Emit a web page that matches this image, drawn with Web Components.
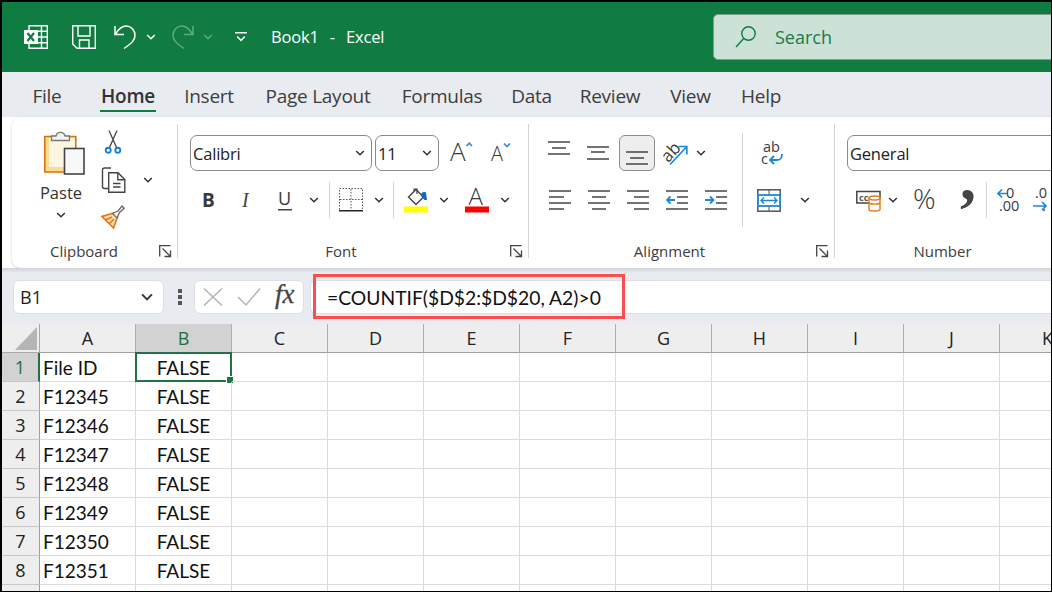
<!DOCTYPE html>
<html>
<head>
<meta charset="utf-8">
<style>
  html, body { margin: 0; height: 100%; background: #000; overflow: hidden; }
  body { padding: 2px 1px 1px 2px; box-sizing: border-box; font-family: "Open Sans", sans-serif; }
</style>
</head>
<body>
<xl-window>
  <xl-titlebar></xl-titlebar>
  <xl-tabs></xl-tabs>
  <xl-ribbon>
    <xl-group label="Clipboard" launcher style="width:166px;--label-shift:3px">
      <xl-row style="padding-left:18px">
        <xl-col style="width:62px;padding-top:5px;align-items:center">
          <xl-icon name="paste" w="62" h="47" style="padding-left:7px"></xl-icon>
          <xl-text size="16.5" style="margin-top:7px">Paste</xl-text>
          <xl-icon name="chev" w="62" h="12" style="margin-top:6px"></xl-icon>
        </xl-col>
        <xl-col style="width:42px">
          <xl-icon name="cut" w="42" h="35"></xl-icon>
          <xl-icon name="copy" w="42" h="38" style="margin-top:2px"></xl-icon>
          <xl-icon name="brush" w="42" h="36"></xl-icon>
        </xl-col>
        <xl-col style="width:28px;padding-top:37px">
          <xl-icon name="chev" w="28" h="38"></xl-icon>
        </xl-col>
      </xl-row>
    </xl-group>

    <xl-group label="Font" launcher style="width:351px">
      <xl-col style="padding:11px 0 0 11px">
        <xl-row style="padding-left:1px;gap:3px">
          <xl-select style="width:182px" value="Calibri"></xl-select>
          <xl-select style="width:64px" value="11"></xl-select>
          <xl-icon name="grow" w="34" h="36" style="margin-left:3px"></xl-icon>
          <xl-icon name="shrink" w="34" h="36" style="margin-left:1px"></xl-icon>
        </xl-row>
        <xl-row style="margin-top:11px">
          <xl-icon name="bold" w="39" h="36"></xl-icon>
          <xl-icon name="italic" w="38" h="36"></xl-icon>
          <xl-icon name="underline" w="38" h="36"></xl-icon>
          <xl-icon name="chev" w="20" h="36"></xl-icon>
          <xl-sep style="margin:0 5px;height:36px"></xl-sep>
          <xl-icon name="borders" w="31" h="36"></xl-icon>
          <xl-icon name="chev" w="26" h="36"></xl-icon>
          <xl-sep style="margin:0 2px 0 1px;height:36px"></xl-sep>
          <xl-icon name="fill" w="40" h="36"></xl-icon>
          <xl-icon name="chev" w="16" h="36"></xl-icon>
          <xl-icon name="color" w="40" h="36" style="margin-left:5px"></xl-icon>
          <xl-icon name="chev" w="16" h="36"></xl-icon>
        </xl-row>
      </xl-col>
    </xl-group>

    <xl-group label="Alignment" launcher style="width:306px">
      <xl-row style="padding:11px 0 0 11px">
        <xl-col style="width:202px">
          <xl-row>
            <xl-icon name="top" w="38" h="36" style="padding-bottom:10px"></xl-icon>
            <xl-icon name="middle" w="40" h="36"></xl-icon>
            <xl-icon name="bottom" w="36" h="36" active style="margin-left:1px"></xl-icon>
            <xl-icon name="orient" w="40" h="36"></xl-icon>
            <xl-icon name="chev" w="12" h="36"></xl-icon>
          </xl-row>
          <xl-row style="margin-top:11px">
            <xl-icon name="left" w="39" h="36"></xl-icon>
            <xl-icon name="center" w="39" h="36"></xl-icon>
            <xl-icon name="right" w="39" h="36"></xl-icon>
            <xl-icon name="outdent" w="39" h="36"></xl-icon>
            <xl-icon name="indent" w="39" h="36"></xl-icon>
          </xl-row>
        </xl-col>
        <xl-sep style="height:94px;margin-top:-2px"></xl-sep>
        <xl-col>
          <xl-icon name="wrap" w="58" h="36"></xl-icon>
          <xl-row style="margin-top:11px">
            <xl-icon name="merge" w="52" h="36"></xl-icon>
            <xl-icon name="chev" w="20" h="36"></xl-icon>
          </xl-row>
        </xl-col>
      </xl-row>
    </xl-group>

    <xl-group label="Number" style="width:240px" last>
      <xl-col style="padding:11px 0 0 12px">
        <xl-select style="width:228px" value="General" bare></xl-select>
        <xl-row style="margin-top:11px">
          <xl-icon name="accounting" w="42" h="36"></xl-icon>
          <xl-icon name="chev" w="8" h="36"></xl-icon>
          <xl-icon name="percent" w="58" h="36"></xl-icon>
          <xl-icon name="comma" w="22" h="36"></xl-icon>
          <xl-sep style="margin-left:9px;height:36px"></xl-sep>
          <xl-icon name="decup" w="44" h="36"></xl-icon>
          <xl-icon name="decdown" w="28" h="36"></xl-icon>
        </xl-row>
      </xl-col>
    </xl-group>
  </xl-ribbon>
  <xl-formula-bar cell="B1" formula="=COUNTIF($D$2:$D$20, A2)&gt;0"></xl-formula-bar>
  <xl-sheet></xl-sheet>
</xl-window>

<script>
const UI_FONT = '"Open Sans", sans-serif';
const lines = (rows) => rows.map(([x1, x2, y]) => `<path d="M${x1} ${y}H${x2}"/>`).join('');
const stack = (body) => `<g stroke="#444" stroke-width="1.4" fill="none">${body}</g>`;
const label = (x, y, size, text, extra = '') =>
  `<text x="${x}" y="${y}" font-size="${size}" font-family='${UI_FONT}' fill="#3a3a3a" ${extra}>${text}</text>`;
const THIN = 'font-weight="300"';

const ICONS = {
  chev: [10, 6, '<path d="M1.2 1l3.8 3.8L8.8 1" fill="none" stroke="currentColor" stroke-width="1.5"/>'],
  logo: [24, 24, `<g fill="none" stroke="#fff" stroke-width="1.4"><path d="M5 .7h18.3v22.6H5z"/><path d="M13 6.3h10M13 12h10M13 17.7h10M17.5 1v22"/></g>
    <rect x="0" y="5" width="14" height="14" fill="#fff"/><path d="M3.5 8l6.5 8M10 8l-6.5 8" stroke="#107c41" stroke-width="2.2" fill="none"/>`],
  save: [24, 24, `<g fill="none" stroke="#fff" stroke-width="1.4"><path d="M.7.7h22.6v22.6H5L.7 19z"/><path d="M6 1v10h12V1M7.5 23v-8h9.5v8"/></g>`],
  undo: [22, 24, `<path d="M1 1v8.5h9M1.5 9C5 3.5 8 1 12 1c5 0 9 4 9 9.5 0 4.5-3 7.5-11 13" fill="none" stroke="currentColor" stroke-width="1.5"/>`],
  redo: [22, 24, `<g transform="translate(22 0) scale(-1 1)"><path d="M1 1v8.5h9M1.5 9C5 3.5 8 1 12 1c5 0 9 4 9 9.5 0 4.5-3 7.5-11 13" fill="none" stroke="currentColor" stroke-width="1.5"/></g>`],
  custom: [12, 10, '<path d="M0 .8h12M2.2 4.5L6 8.5l3.8-4" fill="none" stroke="currentColor" stroke-width="1.5"/>'],
  search: [21, 22, '<g fill="none" stroke="#107c41" stroke-width="1.4"><circle cx="13.5" cy="7.5" r="6.7"/><path d="M8.7 12.5L1 21"/></g>'],
  paste: [41, 45, `<path d="M.8 6.5h31v35.5H.8z" fill="#fbdc94" stroke="#d9730d" stroke-width="1.6"/><rect x="5" y="8" width="26" height="29" fill="#fff6e2"/>
    <path d="M7.5 10.5V6H12a4.6 4.6 0 0 1 9 0h4.5v4.5z" fill="#f4f4f4" stroke="#777" stroke-width="1.3"/>
    <rect x="20.5" y="18.5" width="19.5" height="25.5" fill="#f8f8f8" stroke="#444" stroke-width="1.6"/>`],
  cut: [16, 24, `<g fill="none"><path d="M4 .5l7.5 17M12 .5l-7.5 17" stroke="#444" stroke-width="1.3"/>
    <circle cx="3.2" cy="20.3" r="2.5" stroke="#1e7fd0" stroke-width="1.9"/><circle cx="12.8" cy="20.3" r="2.5" stroke="#1e7fd0" stroke-width="1.9"/></g>`],
  copy: [25, 26, `<g fill="none" stroke="#444" stroke-width="1.4"><path d="M10 1H3.5a2 2 0 0 0-2 2v16.5a2 2 0 0 0 2 2H7"/>
    <path d="M7.7 5.7h9.3l6.8 6.8v12.8H7.7z" fill="#fff"/><path d="M16.8 6v6.8h7M12 16.5h7.5M12 20h7.5"/></g>`],
  brush: [24, 24, `<path d="M12.5 8L1 11.5 12.5 23l4-11z" fill="#fce0b8" stroke="#e5770f" stroke-width="1.7"/>
    <path d="M4 15l7-3M8 19l5-5" stroke="#e5770f" stroke-width="1.5"/>
    <path d="M11.5 8.5l5.5-2.5 4-5 2.2 2.2-4.7 4.2-2.5 5.5z" fill="#fff" stroke="#666" stroke-width="1.3"/>`],
  grow: [24, 24, label(0, 20, 26, 'A', THIN) + '<path d="M16.5 5l2.8-2.8L22 5" fill="none" stroke="#2b8ed6" stroke-width="1.7"/>'],
  shrink: [22, 24, label(2, 20, 20, 'A', THIN) + '<path d="M15 2.5l3 3 3-3" fill="none" stroke="#2b8ed6" stroke-width="1.7"/>'],
  bold: [14, 18, label(0, 16, 19, 'B', 'font-weight="700"')],
  italic: [12, 18, `<text x="1" y="16" font-size="20" font-style="italic" font-family="'Liberation Serif',serif" fill="#444">I</text>`],
  underline: [14, 21, label(0, 15, 18, 'U') + '<path d="M0 19.8h14" stroke="#444" stroke-width="1.4"/>'],
  borders: [24, 24, `<g fill="none" stroke="#555" stroke-width="1" stroke-dasharray="1.5 1.5"><path d="M.5.5h23v22H.5zM12 1v21M1 11.5h22"/></g><path d="M0 22.8h24" stroke="#222" stroke-width="1.5"/>`],
  fill: [24, 25, `<path d="M12 1.5L4.500 9l7.500 7.500L19.500 9z" fill="none" stroke="#444" stroke-width="1.4"/>
    <path d="M10 3V1h3v5" fill="none" stroke="#444" stroke-width="1.2"/><path d="M17 8c0-3 1.5-5 5-3.5L23 12h-2.5" fill="#0f6cbd"/><rect y="18.5" width="24" height="6" fill="#ff0"/>`],
  color: [24, 25, label(3.5, 17, 24, 'A', THIN) + '<rect y="18.5" width="24" height="6" fill="#f00"/>'],
  top: [22, 14, stack(lines([[0, 22, 1], [4, 18, 7], [0, 22, 13]]))],
  middle: [22, 14, stack(lines([[0, 22, 1], [4, 18, 6], [0, 22, 13]]))],
  bottom: [22, 14, stack(lines([[0, 22, 1], [4, 18, 7], [0, 22, 13]]))],
  left: [22, 20, stack(lines([[0, 22, 1], [0, 15, 7], [0, 22, 13], [0, 15, 19]]))],
  center: [22, 20, stack(lines([[0, 22, 1], [4, 18, 7], [0, 22, 13], [4, 18, 19]]))],
  right: [22, 20, stack(lines([[0, 22, 1], [7, 22, 7], [0, 22, 13], [7, 22, 19]]))],
  outdent: [22, 20, stack(lines([[0, 22, 1], [11, 22, 7], [11, 22, 13], [0, 22, 19]])) +
    '<path d="M9 10H1M4.5 6.5L1 10l3.5 3.5" fill="none" stroke="#1e88d8" stroke-width="1.8"/>'],
  indent: [22, 20, stack(lines([[0, 22, 1], [11, 22, 7], [11, 22, 13], [0, 22, 19]])) +
    '<path d="M0 10h8M5 6.5L8.5 10 5 13.5" fill="none" stroke="#1e88d8" stroke-width="1.8"/>'],
  orient: [26, 25, label(0, 18, 17, 'ab', 'transform="rotate(-48 8 13)"') +
    '<path d="M8 23.5L24.5 6M16.500 5.500h8.300v8" fill="none" stroke="#1e88d8" stroke-width="1.7"/>'],
  wrap: [22, 23, label(2, 10, 14.5, 'ab') + label(0, 21.5, 14.5, 'c') +
    '<path d="M9.5 18h6c4.500 0 5.500-2 5.500-6M13 14l-4 4 4 4" fill="none" stroke="#1e88d8" stroke-width="1.8"/>'],
  merge: [24, 23, `<rect x=".8" y=".8" width="22.4" height="21.4" fill="none" stroke="#555" stroke-width="1.5"/><path d="M12 1v5M12 17v5" stroke="#555"/>
    <rect x="1" y="6" width="22" height="11" fill="#fff" stroke="#1e88d8" stroke-width="1.8"/>
    <path d="M4 11.5h16M7 8.5l-3 3 3 3M17 8.5l3 3-3 3" fill="none" stroke="#1e88d8" stroke-width="1.4"/>`],
  accounting: [25, 21, `<path d="M19 13H.8V1.500H24v7" fill="none" stroke="#444" stroke-width="1.5"/>
    <text x="3" y="10.5" font-size="9" font-weight="700" font-family='${UI_FONT}' fill="#555">cc</text>
    <g fill="#fff" stroke="#e5770f" stroke-width="1.4"><path d="M13 8h11v11.5c0 1-2 1.500-5.500 1.500S13 20.500 13 19.500z"/><ellipse cx="18.5" cy="8" rx="5.5" ry="2"/><path d="M13 13c1 1.500 10 1.500 11 0" fill="none"/></g>`],
  percent: [24, 24, label(-1, 21, 28, '%', THIN)],
  comma: [13, 24, `<text x="0" y="11" font-size="64" font-weight="700" font-family="'Liberation Serif',serif" fill="#444">,</text>`],
  decup: [24, 24, label(9, 10, 14.5, '0') + label(2, 23, 14.5, '.00') +
    '<path d="M10 5.500H1M5 1.500l-4 4 4 4" fill="none" stroke="#1e88d8" stroke-width="1.7"/>'],
  decdown: [24, 24, label(2, 10, 14.5, '.0') + label(9, 23, 14.5, '.') +
    '<path d="M0 18h13M9 14l4 4-4 4" fill="none" stroke="#1e88d8" stroke-width="1.7"/>'],
  launcher: [12, 12, '<path d="M.7 11.5V.7h10.800M3.500 3.500l7.500 7.500M11.500 5.500v6h-6" fill="none" stroke="#444" stroke-width="1.3"/>'],
  x: [20, 18, '<path d="M1 .5l18 17M19 .5l-18 17" fill="none" stroke="#b3b3b3" stroke-width="1.5"/>'],
  check: [24, 18, '<path d="M1 9l8 8L23 .5" fill="none" stroke="#b3b3b3" stroke-width="1.5"/>'],
  fx: [22, 24, `<text x="0" y="18" font-size="27" font-style="italic" font-family="'Liberation Serif',serif" fill="#444" stroke="#444" stroke-width=".3">fx</text>`],
};

class XlIcon extends HTMLElement {
  constructor() {
    super();
    const [w, h, body] = ICONS[this.getAttribute('name')];
    const boxW = this.getAttribute('w') || w;
    const boxH = this.getAttribute('h') || h;
    this.attachShadow({ mode: 'open' }).innerHTML = `
      <style>
        :host { display: flex; align-items: center; justify-content: center; flex: none; box-sizing: border-box;
                width: ${boxW}px; height: ${boxH}px; color: #333; }
        :host([active]) { background: #eeeeee; border: 1px solid #8c8c8c; border-radius: 6px; padding-top: 10px; }
        svg { display: block; flex: none; overflow: visible; }
      </style>
      <svg width="${w}" height="${h}" viewBox="0 0 ${w} ${h}">${body}</svg>`;
  }
}

class XlWindow extends HTMLElement {
  constructor() {
    super();
    this.attachShadow({ mode: 'open' }).innerHTML = `
      <style>
        :host { display: flex; flex-direction: column; height: 100%; overflow: hidden; background: #fff; }
      </style>
      <slot></slot>`;
  }
}

class XlTitlebar extends HTMLElement {
  constructor() {
    super();
    this.attachShadow({ mode: 'open' }).innerHTML = `
      <style>
        :host { display: flex; align-items: center; flex: none; height: 70px; background: #107c41; color: #fff;
                padding-left: 22px; overflow: hidden; font-family: ${UI_FONT}; }
        .title { margin: 0 0 2px 24px; font-size: 16.5px; white-space: pre; letter-spacing: -.2px; word-spacing: 1.5px; }
        .search { margin-left: auto; flex: none; width: 420px; height: 46px; box-sizing: border-box; margin-right: -82px;
                  display: flex; align-items: center; gap: 19px; padding-left: 21px;
                  background: #cde2d6; border: 1px solid #7f9d8c; border-radius: 5px;
                  color: #1a7a48; font-size: 18px; }
        xl-icon { color: #fff; }
      </style>
      <xl-icon name="logo"></xl-icon>
      <xl-icon name="save" style="margin-left:24px;color:#fff"></xl-icon>
      <xl-icon name="undo" w="24" style="margin-left:17px;color:#fff"></xl-icon>
      <xl-icon name="chev" style="margin-left:9px;color:#fff"></xl-icon>
      <xl-icon name="redo" w="24" style="margin-left:15px;color:#5fa884"></xl-icon>
      <xl-icon name="chev" style="margin-left:8px;color:#5fa884"></xl-icon>
      <xl-icon name="custom" style="margin-left:22px;color:#fff"></xl-icon>
      <span class="title">Book1  -  Excel</span>
      <div class="search"><xl-icon name="search"></xl-icon><span>Search</span></div>`;
  }
}

const TABS = [
  ['File', 30, 30], ['Home', 56, 38], ['Insert', 48, 29], ['Page Layout', 106, 32], ['Formulas', 80, 31],
  ['Data', 41, 29], ['Review', 60, 28], ['View', 41, 30], ['Help', 40, 30],
];

class XlTabs extends HTMLElement {
  constructor() {
    super();
    const tabs = TABS.map(([name, w, gap]) =>
      `<div class="tab${name === 'Home' ? ' on' : ''}" style="width:${w}px;margin-left:${gap}px">${name}</div>`).join('');
    this.attachShadow({ mode: 'open' }).innerHTML = `
      <style>
        :host { display: flex; flex: none; height: 45px; background: #e8ecf1; font-family: ${UI_FONT};
                font-size: 19px; color: #3d3d3d; letter-spacing: -.25px; }
        .tab { display: flex; justify-content: center; white-space: nowrap; padding-top: 11px; box-sizing: border-box; height: 40px; }
        .on { font-weight: 600; border-bottom: 2.5px solid #107c41; color: #333; }
      </style>
      ${tabs}`;
  }
}

class XlRibbon extends HTMLElement {
  constructor() {
    super();
    this.attachShadow({ mode: 'open' }).innerHTML = `
      <style>
        :host { display: flex; flex: none; height: 151px; margin-left: 10px; background: #fff;
                border-radius: 9px 0 0 9px; box-shadow: 0 1px 3px rgba(0,0,0,.18); overflow: hidden; }
      </style>
      <slot></slot>`;
  }
}

class XlGroup extends HTMLElement {
  constructor() {
    super();
    const launcher = this.hasAttribute('launcher') ? '<xl-icon name="launcher" w="24" h="20"></xl-icon>' : '';
    this.attachShadow({ mode: 'open' }).innerHTML = `
      <style>
        :host { display: flex; flex-direction: column; flex: none; box-sizing: border-box; height: 151px; padding: 7px 0 7px;
                background: linear-gradient(#d4d4d4,#d4d4d4) right 7px / 1px 134px no-repeat;
                font-family: ${UI_FONT}; }
        .body { flex: 1; min-height: 0; display: flex; }
        .foot { display: flex; align-items: center; height: 20px; padding-right: 1px; padding-left: var(--label-shift, 0); }
        .name { flex: 1; text-align: center; font-size: 15px; color: #3d3d3d; padding-right: ${launcher ? 0 : 24}px; }
      </style>
      <div class="body"><slot></slot></div>
      <div class="foot"><div class="name">${this.getAttribute('label')}</div>${launcher}</div>`;
  }
}

class XlRow extends HTMLElement {
  constructor() {
    super();
    this.attachShadow({ mode: 'open' }).innerHTML = `
      <style>:host { display: flex; align-items: flex-start; }</style><slot></slot>`;
  }
}

class XlCol extends HTMLElement {
  constructor() {
    super();
    this.attachShadow({ mode: 'open' }).innerHTML = `
      <style>:host { display: flex; flex-direction: column; flex: none; }</style><slot></slot>`;
  }
}

class XlSep extends HTMLElement {
  constructor() {
    super();
    this.attachShadow({ mode: 'open' }).innerHTML = `
      <style>:host { display: block; flex: none; width: 1px; background: #d4d4d4; }</style>`;
  }
}

class XlText extends HTMLElement {
  constructor() {
    super();
    this.attachShadow({ mode: 'open' }).innerHTML = `
      <style>:host { display: block; font-size: ${this.getAttribute('size')}px; line-height: 20px; color: #333; }</style><slot></slot>`;
  }
}

class XlSelect extends HTMLElement {
  constructor() {
    super();
    const chevron = this.hasAttribute('bare') ? '' : '<xl-icon name="chev" w="22" style="margin-left:auto"></xl-icon>';
    this.attachShadow({ mode: 'open' }).innerHTML = `
      <style>
        :host { display: flex; align-items: center; flex: none; box-sizing: border-box; height: 36px; padding-left: 2px;
                border: 1px solid #8a8a8a; border-radius: 7px; background: #fff;
                font-family: ${UI_FONT}; font-size: 16.5px; color: #222; letter-spacing: -.2px; }
      </style>
      <span>${this.getAttribute('value')}</span>${chevron}`;
  }
}

class XlFormulaBar extends HTMLElement {
  constructor() {
    super();
    this.attachShadow({ mode: 'open' }).innerHTML = `
      <style>
        :host { display: flex; flex: none; height: 56px; box-sizing: border-box; padding: 12px 0 10px 11px; position: relative;
                background: linear-gradient(#cfd3d7 0, #e8ecf1 5px); font-family: ${UI_FONT}; color: #222; font-size: 18px; }
        .box { display: flex; align-items: center; background: #fff; border: 1px solid #dcdfe3; border-radius: 6px; box-sizing: border-box; }
        .name { width: 151px; padding-left: 6px; }
        .dots { width: 30px; display: flex; flex-direction: column; align-items: center; justify-content: center; gap: 2.5px; padding-left: 1px; box-sizing: border-box; }
        .dots i { width: 4px; height: 3.5px; background: #555; display: block; }
        .fx { width: 110px; padding-left: 8px; }
        .formula { flex: 1; margin-left: 6px; padding-left: 16px; border-radius: 6px 0 0 6px; border-right: 0; font-family: Lato, sans-serif; font-size: 19.3px; color: #111; }
        .mark { position: absolute; left: 311px; top: 6px; width: 312px; height: 45px; box-sizing: border-box; border: 3px solid #fb4f4f; }
      </style>
      <div class="box name">${this.getAttribute('cell')}<xl-icon name="chev" w="16" style="margin-left:auto;margin-right:8px;transform:scale(1.3)"></xl-icon></div>
      <div class="dots"><i></i><i></i><i></i></div>
      <div class="box fx">
        <xl-icon name="x"></xl-icon>
        <xl-icon name="check" style="margin-left:14px"></xl-icon>
        <xl-icon name="fx" style="margin-left:14px"></xl-icon>
      </div>
      <div class="box formula">${this.getAttribute('formula')}</div>
      <div class="mark"></div>`;
  }
}

const COLUMNS = ['A', 'B', 'C', 'D', 'E', 'F', 'G', 'H', 'I', 'J', 'K'];
const FILE_IDS = ['File ID', 'F12345', 'F12346', 'F12347', 'F12348', 'F12349', 'F12350', 'F12351'];

class XlSheet extends HTMLElement {
  constructor() {
    super();
    const head = COLUMNS.map((c) => `<div class="hd col${c === 'B' ? ' sel' : ''}">${c}</div>`).join('');
    const rows = [...FILE_IDS, ''].map((id, i) => {
      const cells = COLUMNS.map((c, j) => {
        if (j === 0) return `<div class="cell">${id}</div>`;
        if (j === 1) return `<div class="cell mid">${id ? 'FALSE' : ''}${i === 0 ? '<b class="cursor"><u></u></b>' : ''}</div>`;
        return '<div class="cell"></div>';
      }).join('');
      return `<div class="hd row${i === 0 ? ' sel' : ''}">${id ? i + 1 : ''}</div>${cells}`;
    }).join('');
    this.attachShadow({ mode: 'open' }).innerHTML = `
      <style>
        :host { display: grid; grid-template-columns: 38px repeat(11, 96px); grid-auto-rows: 29px; flex: 1; min-height: 0; overflow: hidden;
                background: #fff; font-family: Lato, sans-serif; font-size: 19px; color: #111; }
        .corner { background: #eeeeee; border-right: 1px solid #a8a8a8; border-bottom: 1px solid #a8a8a8; box-sizing: border-box; display: flex; align-items: flex-end; justify-content: flex-end; padding: 0 2px 2px 0; }
        .corner svg { display: block; }
        .hd { display: flex; align-items: center; justify-content: center; box-sizing: border-box; background: #eeeeee;
              font-family: ${UI_FONT}; font-size: 18px; color: #222; }
        .col { border-right: 1px solid #b0b0b0; border-bottom: 1px solid #a0a0a0; }
        .row { border-right: 1px solid #a0a0a0; border-bottom: 1px solid #c8c8c8; }
        .sel { background: #d2d2d2; color: #1f6e43; }
        .row.sel { border-right: 2px solid #217346; }
        .cell { display: flex; align-items: center; box-sizing: border-box; padding-left: 3px; white-space: nowrap;
                border-right: 1px solid #dcdcdc; border-bottom: 1px solid #dcdcdc; position: relative; }
        .mid { justify-content: center; padding-left: 0; }
        .cursor { position: absolute; inset: -1px; border: 2.5px solid #217346; }
        .cursor u { position: absolute; right: -4px; bottom: -4px; width: 6px; height: 6px; background: #217346; border: 1px solid #fff; }
      </style>
      <div class="corner"><svg width="22" height="23"><path d="M22 0V23H0z" fill="#b5b5b5"/></svg></div>
      ${head}${rows}`;
  }
}

customElements.define('xl-icon', XlIcon);
customElements.define('xl-window', XlWindow);
customElements.define('xl-titlebar', XlTitlebar);
customElements.define('xl-tabs', XlTabs);
customElements.define('xl-ribbon', XlRibbon);
customElements.define('xl-group', XlGroup);
customElements.define('xl-row', XlRow);
customElements.define('xl-col', XlCol);
customElements.define('xl-sep', XlSep);
customElements.define('xl-text', XlText);
customElements.define('xl-select', XlSelect);
customElements.define('xl-formula-bar', XlFormulaBar);
customElements.define('xl-sheet', XlSheet);
</script>
</body>
</html>
